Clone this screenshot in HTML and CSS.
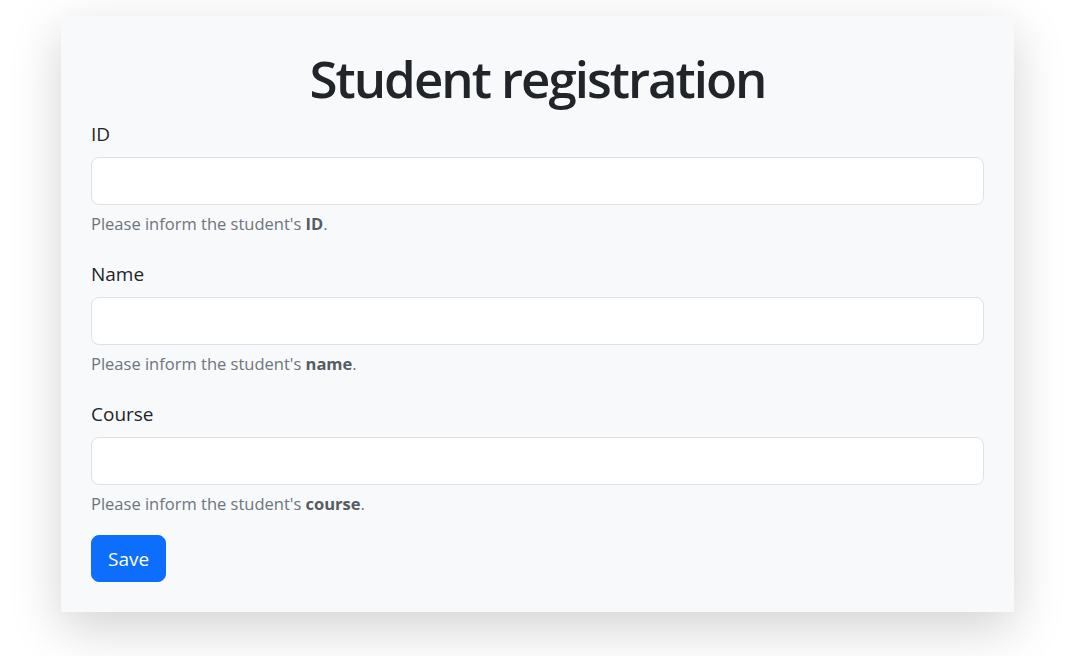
FILE: index.html
```html
<!DOCTYPE html>
<html lang="en">
<head>
<meta charset="utf-8">
<title>Student registration</title>
<link rel="stylesheet" href="styles.css">
</head>
<body>
<main class="card">
  <h1 class="title">Student registration</h1>
  <form class="form">
    <div class="field">
      <label class="label" for="id">ID</label>
      <input class="input" id="id" type="text">
      <div class="help">Please inform the student's <strong>ID</strong>.</div>
    </div>
    <div class="field">
      <label class="label" for="name">Name</label>
      <input class="input" id="name" type="text">
      <div class="help">Please inform the student's <strong>name</strong>.</div>
    </div>
    <div class="field">
      <label class="label" for="course">Course</label>
      <input class="input" id="course" type="text">
      <div class="help">Please inform the student's <strong>course</strong>.</div>
    </div>
    <div class="actions">
      <button class="btn" type="submit">Save</button>
    </div>
  </form>
</main>
</body>
</html>
```
FILE: styles.css
```css
* { box-sizing: border-box; }
html, body { margin: 0; padding: 0; background: #fff; }
body {
  font-family: "Open Sans", "Noto Sans", sans-serif;
  color: #212529;
  padding: 16px 0 60px;
  min-height: 100vh;
}
.card {
  width: 953px;
  margin: 0 auto;
  position: relative;
  left: -1px;
  background: #f8f9fa;
  padding: 30px;
  box-shadow: 0 16px 48px rgba(0, 0, 0, 0.175);
}
.title {
  margin: 0 0 6px;
  text-align: center;
  font-size: 51px;
  letter-spacing: -2px;
  line-height: 64px;
  padding-bottom: 3px;
  font-weight: 600;
  color: #212529;
}
.form { display: flex; flex-direction: column; }
.field { display: flex; flex-direction: column; margin-bottom: 22px; }
.label {
  font-size: 19px;
  line-height: 30px;
  margin-bottom: 8px;
}
.input {
  height: 48px;
  border: 1px solid #dee2e6;
  border-radius: 8px;
  background: #fff;
  padding: 8px 16px;
  font: inherit;
  font-size: 20px;
}
.help {
  margin-top: 6px;
  font-size: 16.5px;
  line-height: 26px;
  color: #6c757d;
}
.help strong { font-weight: 700; color: #555c63; }
.actions { display: flex; margin-top: -4px; }
.btn {
  height: 47px;
  padding: 0 16px;
  background: #0d6efd;
  color: #fff;
  border: 1px solid #0d6efd;
  border-radius: 8px;
  font: inherit;
  font-size: 19px;
}
```
